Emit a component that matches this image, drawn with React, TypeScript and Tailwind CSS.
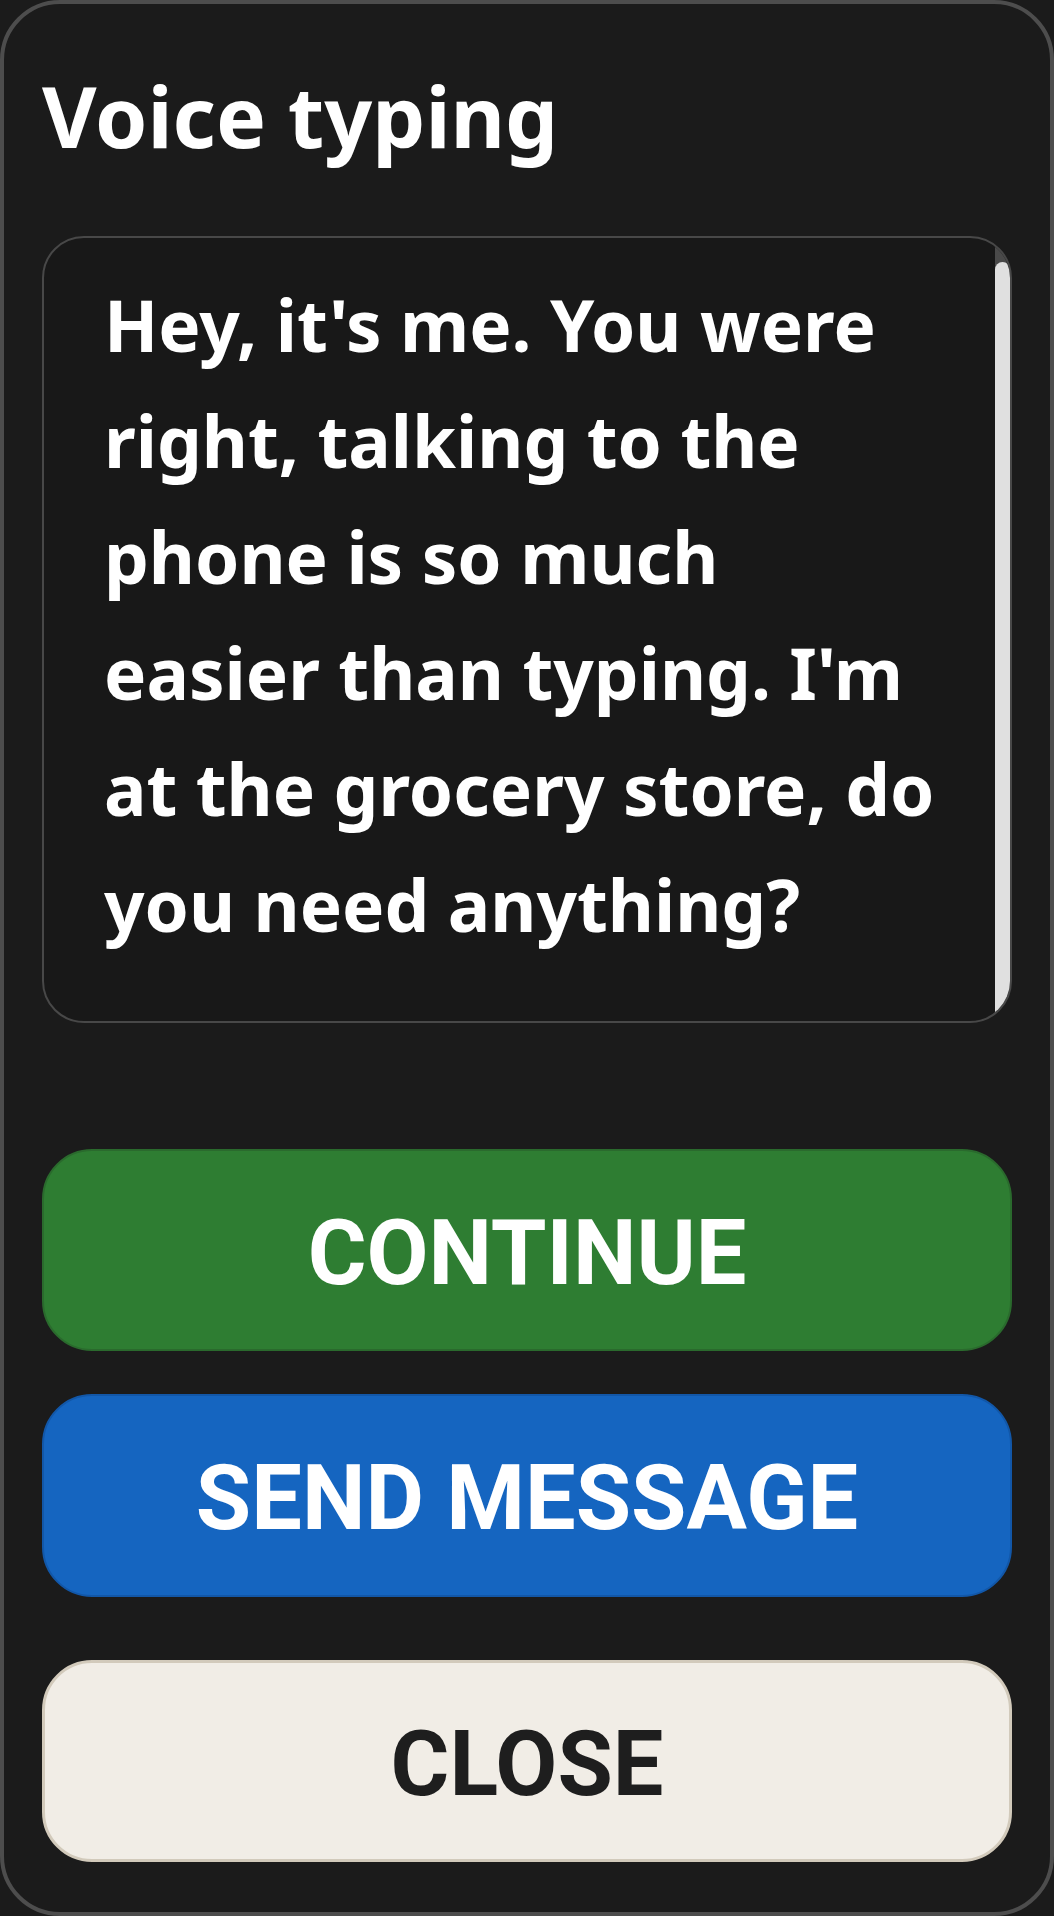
import React from "react";

const lines = [
  "Hey, it's me. You were",
  "right, talking to the",
  "phone is so much",
  "easier than typing. I'm",
  "at the grocery store, do",
  "you need anything?",
];

export default function App() {
  return (
    <div className="w-[1054px] h-[1916px] bg-[#1b1b1b]">
      <div className="w-full h-full flex flex-col bg-[#1b1b1b] border-4 border-[#4d4d4d] rounded-[60px] px-[38px] pt-[52px]">
        <h1
          className="text-[84px] leading-[120px] font-bold text-white whitespace-nowrap"
          style={{ fontFamily: '"Noto Sans", sans-serif' }}
        >
          Voice typing
        </h1>

        <div className="relative mt-[60px] h-[787px] shrink-0 rounded-[42px] border-2 border-[#484848] bg-[#181818] overflow-hidden">
          <p
            className="pl-[60px] pr-[30px] pt-[29px] text-[71px] leading-[116px] font-bold text-white"
            style={{ fontFamily: '"Noto Sans", sans-serif' }}
          >
            {lines.map((l, i) => (
              <span key={i} className="block whitespace-nowrap">
                {l}
              </span>
            ))}
          </p>
          <div className="absolute right-0 top-0 bottom-0 w-[15px] bg-[#4a4a4a]">
            <div className="absolute left-0 right-0 top-[24px] bottom-0 rounded-t-full bg-[#e0e0e0]" />
          </div>
        </div>

        <button
          className="mt-[126px] h-[202px] shrink-0 w-full rounded-[50px] border-2 border-[#2a6a2d] bg-[#2e7d32] text-white text-[90px] font-bold leading-none flex items-center justify-center pt-[7px]"
          style={{ fontFamily: 'Roboto, "Liberation Sans", sans-serif' }}
        >
          CONTINUE
        </button>

        <button
          className="mt-[43px] h-[203px] shrink-0 w-full rounded-[50px] border-2 border-[#1257a8] bg-[#1565c0] text-white text-[90px] font-bold leading-none flex items-center justify-center pt-[7px]"
          style={{ fontFamily: 'Roboto, "Liberation Sans", sans-serif' }}
        >
          SEND MESSAGE
        </button>

        <button
          className="mt-[63px] h-[202px] shrink-0 w-full rounded-[50px] border-[3px] border-[#d2cabb] bg-[#f1ede6] text-[#1e1e1e] text-[90px] font-bold leading-none flex items-center justify-center pt-[7px]"
          style={{ fontFamily: 'Roboto, "Liberation Sans", sans-serif' }}
        >
          CLOSE
        </button>
      </div>
    </div>
  );
}
